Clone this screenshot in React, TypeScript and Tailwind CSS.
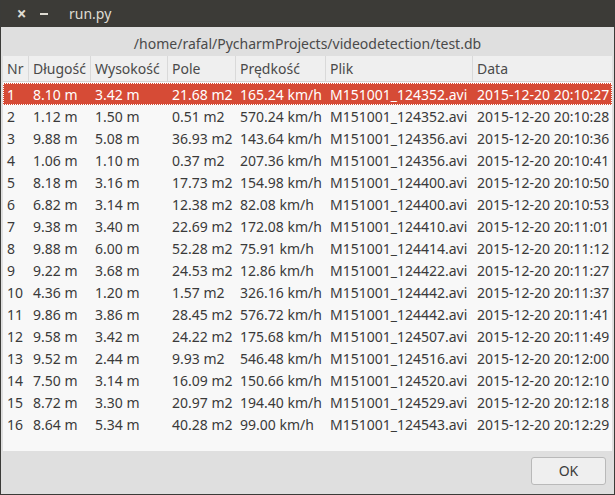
import { useState } from "react";

type Row = [string, string, string, string, string, string, string];

const rows: Row[] = [
  ["1", "8.10 m", "3.42 m", "21.68 m2", "165.24 km/h", "M151001_124352.avi", "2015-12-20 20:10:27"],
  ["2", "1.12 m", "1.50 m", "0.51 m2", "570.24 km/h", "M151001_124352.avi", "2015-12-20 20:10:28"],
  ["3", "9.88 m", "5.08 m", "36.93 m2", "143.64 km/h", "M151001_124356.avi", "2015-12-20 20:10:36"],
  ["4", "1.06 m", "1.10 m", "0.37 m2", "207.36 km/h", "M151001_124356.avi", "2015-12-20 20:10:41"],
  ["5", "8.18 m", "3.16 m", "17.73 m2", "154.98 km/h", "M151001_124400.avi", "2015-12-20 20:10:50"],
  ["6", "6.82 m", "3.14 m", "12.38 m2", "82.08 km/h", "M151001_124400.avi", "2015-12-20 20:10:53"],
  ["7", "9.38 m", "3.40 m", "22.69 m2", "172.08 km/h", "M151001_124410.avi", "2015-12-20 20:11:01"],
  ["8", "9.88 m", "6.00 m", "52.28 m2", "75.91 km/h", "M151001_124414.avi", "2015-12-20 20:11:12"],
  ["9", "9.22 m", "3.68 m", "24.53 m2", "12.86 km/h", "M151001_124422.avi", "2015-12-20 20:11:27"],
  ["10", "4.36 m", "1.20 m", "1.57 m2", "326.16 km/h", "M151001_124442.avi", "2015-12-20 20:11:37"],
  ["11", "9.86 m", "3.86 m", "28.45 m2", "576.72 km/h", "M151001_124442.avi", "2015-12-20 20:11:41"],
  ["12", "9.58 m", "3.42 m", "24.22 m2", "175.68 km/h", "M151001_124507.avi", "2015-12-20 20:11:49"],
  ["13", "9.52 m", "2.44 m", "9.93 m2", "546.48 km/h", "M151001_124516.avi", "2015-12-20 20:12:00"],
  ["14", "7.50 m", "3.14 m", "16.09 m2", "150.66 km/h", "M151001_124520.avi", "2015-12-20 20:12:10"],
  ["15", "8.72 m", "3.30 m", "20.97 m2", "194.40 km/h", "M151001_124529.avi", "2015-12-20 20:12:18"],
  ["16", "8.64 m", "5.34 m", "40.28 m2", "99.00 km/h", "M151001_124543.avi", "2015-12-20 20:12:29"],
];

const headers = ["Nr", "Długość", "Wysokość", "Pole", "Prędkość", "Plik", "Data"];
const cols = "grid-cols-[26px_62px_77px_68px_90px_147px_139px]";

export default function App() {
  const [selected, setSelected] = useState(0);

  return (
    <div
      className="w-[615px] h-[495px] flex flex-col bg-[#dfdfdf] border-x border-b border-[#3b3b38] text-[14px] text-[#3a3a3a] overflow-hidden"
      style={{ fontFamily: '"Noto Sans", "Liberation Sans", sans-serif' }}
    >
      {/* title bar */}
      <div className="h-[27px] shrink-0 bg-[#3c3b37] flex items-center text-[#dfdbd2] -mx-px">
        <span className="w-[40px] text-center pl-[3px] text-[17px] leading-none font-bold">×</span>
        <span className="w-[8px] h-[2px] bg-[#dfdbd2]" />
        <span className="ml-[21px] text-[14px]">run.py</span>
      </div>

      <div className="h-[29px] shrink-0 flex items-center justify-center text-[14px] text-[#4a4a4a] pt-[3px]">
        /home/rafal/PycharmProjects/videodetection/test.db
      </div>

      {/* table */}
      <div className="mx-[2px] h-[395px] shrink-0 bg-[#f8f8f8] flex flex-col">
        <div className={`grid ${cols} h-[26px] bg-[#efefef] border-b border-[#d6d6d6]`}>
          {headers.map((h, i) => (
            <div
              key={h}
              className={`flex items-center px-[4px] text-[14px] text-[#4a4a4a] ${i < headers.length - 1 ? "border-r border-[#d9d9d9]" : ""}`}
            >
              {h}
            </div>
          ))}
        </div>
        <div className="pt-[1px]">
          {rows.map((r, idx) => (
            <div
              key={idx}
              onClick={() => setSelected(idx)}
              className={`grid ${cols} h-[22px] items-center ${
                idx === selected
                  ? "bg-[#d64b36] text-white outline-1 outline-dotted outline-white -outline-offset-1"
                  : ""
              }`}
            >
              {r.map((c, i) => (
                <div key={i} className="px-[4px] pt-[2px] whitespace-nowrap overflow-hidden leading-[20px]">
                  {c}
                </div>
              ))}
            </div>
          ))}
        </div>
      </div>

      <div className="flex-1 flex justify-end items-center pr-[8px] pb-[4px]">
        <button className="w-[75px] h-[28px] rounded-[3px] border border-[#b9b9b9] bg-[#efefef] text-[14px] text-[#3c3c3c]">
          OK
        </button>
      </div>
    </div>
  );
}
